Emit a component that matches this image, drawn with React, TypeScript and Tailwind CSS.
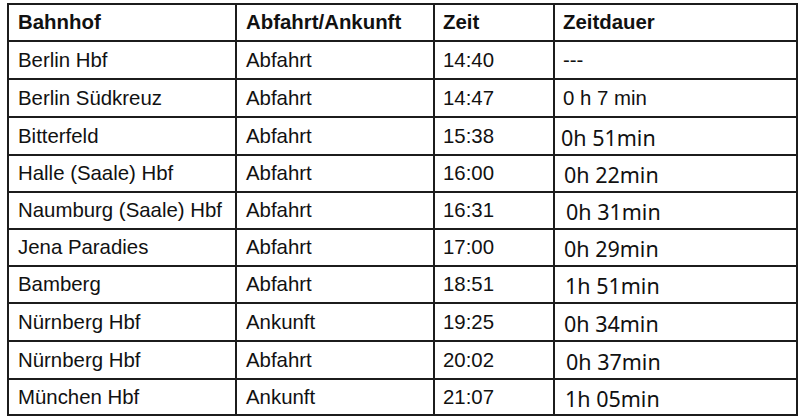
type Stop = {
  station: string;
  kind: string;
  time: string;
  duration: string;
  alt?: boolean;
  pad: string;
};

const stops: Stop[] = [
  { station: 'Berlin Hbf', kind: 'Abfahrt', time: '14:40', duration: '---', pad: 'pl-[8px]' },
  { station: 'Berlin Südkreuz', kind: 'Abfahrt', time: '14:47', duration: '0 h 7 min', pad: 'pl-[8px]' },
  { station: 'Bitterfeld', kind: 'Abfahrt', time: '15:38', duration: '0h 51min', alt: true, pad: 'pl-[6px]' },
  { station: 'Halle (Saale) Hbf', kind: 'Abfahrt', time: '16:00', duration: '0h 22min', alt: true, pad: 'pl-[9px]' },
  { station: 'Naumburg (Saale) Hbf', kind: 'Abfahrt', time: '16:31', duration: '0h 31min', alt: true, pad: 'pl-[11px]' },
  { station: 'Jena Paradies', kind: 'Abfahrt', time: '17:00', duration: '0h 29min', alt: true, pad: 'pl-[9px]' },
  { station: 'Bamberg', kind: 'Abfahrt', time: '18:51', duration: '1h 51min', alt: true, pad: 'pl-[10px]' },
  { station: 'Nürnberg Hbf', kind: 'Ankunft', time: '19:25', duration: '0h 34min', alt: true, pad: 'pl-[9px]' },
  { station: 'Nürnberg Hbf', kind: 'Abfahrt', time: '20:02', duration: '0h 37min', alt: true, pad: 'pl-[11px]' },
  { station: 'München Hbf', kind: 'Ankunft', time: '21:07', duration: '1h 05min', alt: true, pad: 'pl-[10px]' },
];

const cell = 'bg-white flex items-center text-[20.4px] leading-none text-[#111]';

export default function App() {
  return (
    <div className="w-[800px] h-[417px] bg-white overflow-hidden pt-[3px] pl-[7px] font-['Liberation_Sans',Arial,sans-serif]">
      <div className="inline-grid grid-cols-[226px_196px_118px_241px] grid-rows-[35px_36px_36px_36px_35px_35px_35px_35px_36px_36px_34px] gap-[2px] p-[2px] bg-[#1c1c1c]">
        {/* header */}
        <div className={`${cell} pl-[9px] font-bold`}>Bahnhof</div>
        <div className={`${cell} pl-[9px] font-bold`}>Abfahrt/Ankunft</div>
        <div className={`${cell} pl-[8px] font-bold`}>Zeit</div>
        <div className={`${cell} pl-[8px] font-bold`}>Zeitdauer</div>

        {stops.map((s, i) => (
          <div key={i} className="contents">
            <div className={`${cell} pl-[9px]`}>{s.station}</div>
            <div className={`${cell} pl-[9px]`}>{s.kind}</div>
            <div className={`${cell} pl-[8px]`}>{s.time}</div>
            <div
              className={`${cell} ${s.pad} ${
                s.alt ? "font-['Noto_Sans',sans-serif] text-[21.5px] pt-[3px]" : ''
              }`}
            >
              {s.duration}
            </div>
          </div>
        ))}
      </div>
    </div>
  );
}
